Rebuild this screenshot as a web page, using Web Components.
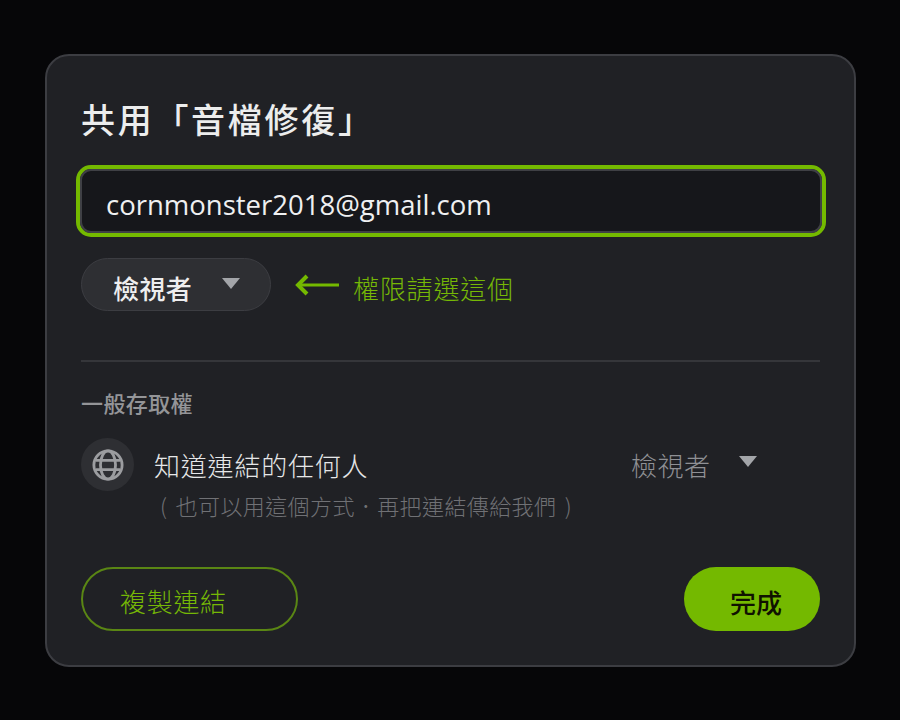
<!DOCTYPE html>
<html lang="zh-Hant">
<head>
<meta charset="utf-8">
<title>共用</title>
<style>
  html, body {
    margin: 0;
    height: 720px;
    overflow: hidden;
    background: #060608;
    font-family: "Noto Sans CJK TC", "Noto Sans", sans-serif;
  }
</style>
</head>
<body>
<share-dialog>
  <span slot="title">共用「音檔修復」</span>
  <email-field slot="email">cornmonster2018@gmail.com</email-field>
  <role-pill slot="role">檢視者</role-pill>
  <arrow-hint slot="hint">權限請選這個</arrow-hint>
  <access-row slot="access"></access-row>
  <pill-button slot="copy" variant="outline">複製連結</pill-button>
  <pill-button slot="done" variant="solid">完成</pill-button>
</share-dialog>

<script>
class ShareDialog extends HTMLElement {
  constructor() {
    super();
    this.attachShadow({ mode: 'open' });
    this.shadowRoot.innerHTML = /*html*/`
    <style>
      :host {
        display: block;
        box-sizing: border-box;
        width: 811px;
        height: 613px;
        margin: 54px 0 0 45px;
        padding: 41px 34px 34px 34px;
        background: #202125;
        border: 2px solid #3c3d42;
        border-radius: 24px;
        color: #f1f2f3;
      }
      h1 {
        margin: 0;
        font-size: 34px;
        line-height: 44px;
        font-weight: 500;
        letter-spacing: 2.7px;
        color: #eceded;
      }
      .email { margin: 24px 0 0 -5px; }
      .perm {
        display: flex;
        align-items: center;
        column-gap: 24px;
        margin-top: 21px;
      }
      hr {
        height: 2px;
        margin: 49px 0 0 0;
        border: 0;
        background: #35363a;
      }
      h2 {
        margin: 25px 0 0 0;
        font-size: 22px;
        line-height: 30px;
        font-weight: 500;
        letter-spacing: 0.4px;
        color: #949598;
      }
      .access { margin-top: 21px; }
      .actions {
        display: flex;
        justify-content: space-between;
        margin-top: 47px;
      }
    </style>
    <h1><slot name="title"></slot></h1>
    <div class="email"><slot name="email"></slot></div>
    <div class="perm">
      <slot name="role"></slot>
      <slot name="hint"></slot>
    </div>
    <hr>
    <h2>一般存取權</h2>
    <div class="access"><slot name="access"></slot></div>
    <div class="actions">
      <slot name="copy"></slot>
      <slot name="done"></slot>
    </div>
    `;
  }
}

class EmailField extends HTMLElement {
  constructor() {
    super();
    this.attachShadow({ mode: 'open' });
    this.shadowRoot.innerHTML = /*html*/`
    <style>
      :host {
        display: block;
        box-sizing: border-box;
        width: 750px;
        height: 72px;
        border: 4px solid #74b900;
        border-radius: 15px;
      }
      .inner {
        box-sizing: border-box;
        height: 100%;
        padding: 7px 24px 0;
        display: flex;
        align-items: center;
        background: #16171b;
        border: 2px solid #3f4045;
        border-radius: 11px;
        font-family: "Open Sans", "Noto Sans", sans-serif;
        font-size: 27.5px;
        color: #eff0f1;
      }
    </style>
    <div class="inner"><slot></slot></div>
    `;
  }
}

class RolePill extends HTMLElement {
  constructor() {
    super();
    this.attachShadow({ mode: 'open' });
    this.shadowRoot.innerHTML = /*html*/`
    <style>
      :host {
        display: flex;
        box-sizing: border-box;
        align-items: center;
        width: 190px;
        height: 53px;
        padding: 0 0 0 31px;
        background: #2e2f33;
        border: 1px solid #3c3d42;
        border-radius: 27px;
        font-size: 26px;
        font-weight: 500;
        letter-spacing: 0.4px;
        color: #eeeeef;
      }
      .label { padding-top: 6px; }
      svg { margin: -1px 0 0 30px; }
    </style>
    <span class="label"><slot></slot></span>
    <svg width="18" height="12" viewBox="0 0 18 12"><path d="M0 0h18l-9 11z" fill="#a3a5a9"/></svg>
    `;
  }
}

class ArrowHint extends HTMLElement {
  constructor() {
    super();
    this.attachShadow({ mode: 'open' });
    this.shadowRoot.innerHTML = /*html*/`
    <style>
      :host {
        display: flex;
        align-items: center;
        column-gap: 14px;
        font-size: 26px;
        font-weight: 300;
        letter-spacing: 0.8px;
        color: #76b806;
      }
      .label { padding-top: 6px; }
    </style>
    <svg width="44" height="22" viewBox="0 0 44 22" fill="none" stroke="#74b900">
      <path d="M44 11H4" stroke-width="3"/>
      <path d="M12 2L3 11l9 9" stroke-width="4"/>
    </svg>
    <span class="label"><slot></slot></span>
    `;
  }
}

class AccessRow extends HTMLElement {
  constructor() {
    super();
    this.attachShadow({ mode: 'open' });
    this.shadowRoot.innerHTML = /*html*/`
    <style>
      :host {
        display: grid;
        grid-template-columns: 53px 457px auto;
        column-gap: 20px;
      }
      .icon {
        grid-row: span 2;
        width: 53px;
        height: 53px;
        display: flex;
        align-items: center;
        justify-content: center;
        background: #2e2f33;
        border-radius: 50%;
      }
      .name {
        font-size: 26px;
        font-weight: 300;
        line-height: 54px;
        letter-spacing: 0.8px;
        color: #e6e7e8;
      }
      .role {
        display: flex;
        align-items: center;
        font-size: 26px;
        font-weight: 300;
        line-height: 54px;
        letter-spacing: 0.5px;
        color: #8f9094;
      }
      .role svg { margin: -6px 0 0 28px; }
      .note {
        grid-column: 2 / 4;
        font-size: 22px;
        font-weight: 300;
        line-height: 30px;
        margin: -2px 0 0 6px;
        letter-spacing: 0.4px;
        word-spacing: 3px;
        color: #707175;
      }
    </style>
    <div class="icon">
      <svg width="32" height="32" viewBox="0 0 34 34" fill="none" stroke="#9c9da0" stroke-width="3">
        <circle cx="17" cy="17" r="15"/>
        <ellipse cx="17" cy="17" rx="8" ry="15"/>
        <path d="M4 12h26M4 22h26"/>
      </svg>
    </div>
    <div class="name">知道連結的任何人</div>
    <div class="role">檢視者<svg width="18" height="12" viewBox="0 0 18 12"><path d="M0 0h18l-9 11z" fill="#a3a5a9"/></svg></div>
    <div class="note">( 也可以用這個方式．再把連結傳給我們 )</div>
    `;
  }
}

class PillButton extends HTMLElement {
  constructor() {
    super();
    this.attachShadow({ mode: 'open' });
    this.shadowRoot.innerHTML = /*html*/`
    <style>
      :host {
        display: flex;
        box-sizing: border-box;
        align-items: center;
        height: 64px;
        padding-top: 2px;
        border-radius: 32px;
        font-size: 26px;
      }
      :host([variant="outline"]) {
        width: 217px;
        padding-left: 37px;
        border: 2px solid #5a8614;
        font-weight: 300;
        letter-spacing: 0.7px;
        color: #76b806;
      }
      :host([variant="solid"]) {
        width: 136px;
        justify-content: center;
        padding-top: 4px;
        padding-left: 8px;
        background: #74b900;
        font-weight: 500;
        color: #101200;
      }
    </style>
    <slot></slot>
    `;
  }
}

customElements.define('share-dialog', ShareDialog);
customElements.define('email-field', EmailField);
customElements.define('role-pill', RolePill);
customElements.define('arrow-hint', ArrowHint);
customElements.define('access-row', AccessRow);
customElements.define('pill-button', PillButton);
</script>
</body>
</html>
